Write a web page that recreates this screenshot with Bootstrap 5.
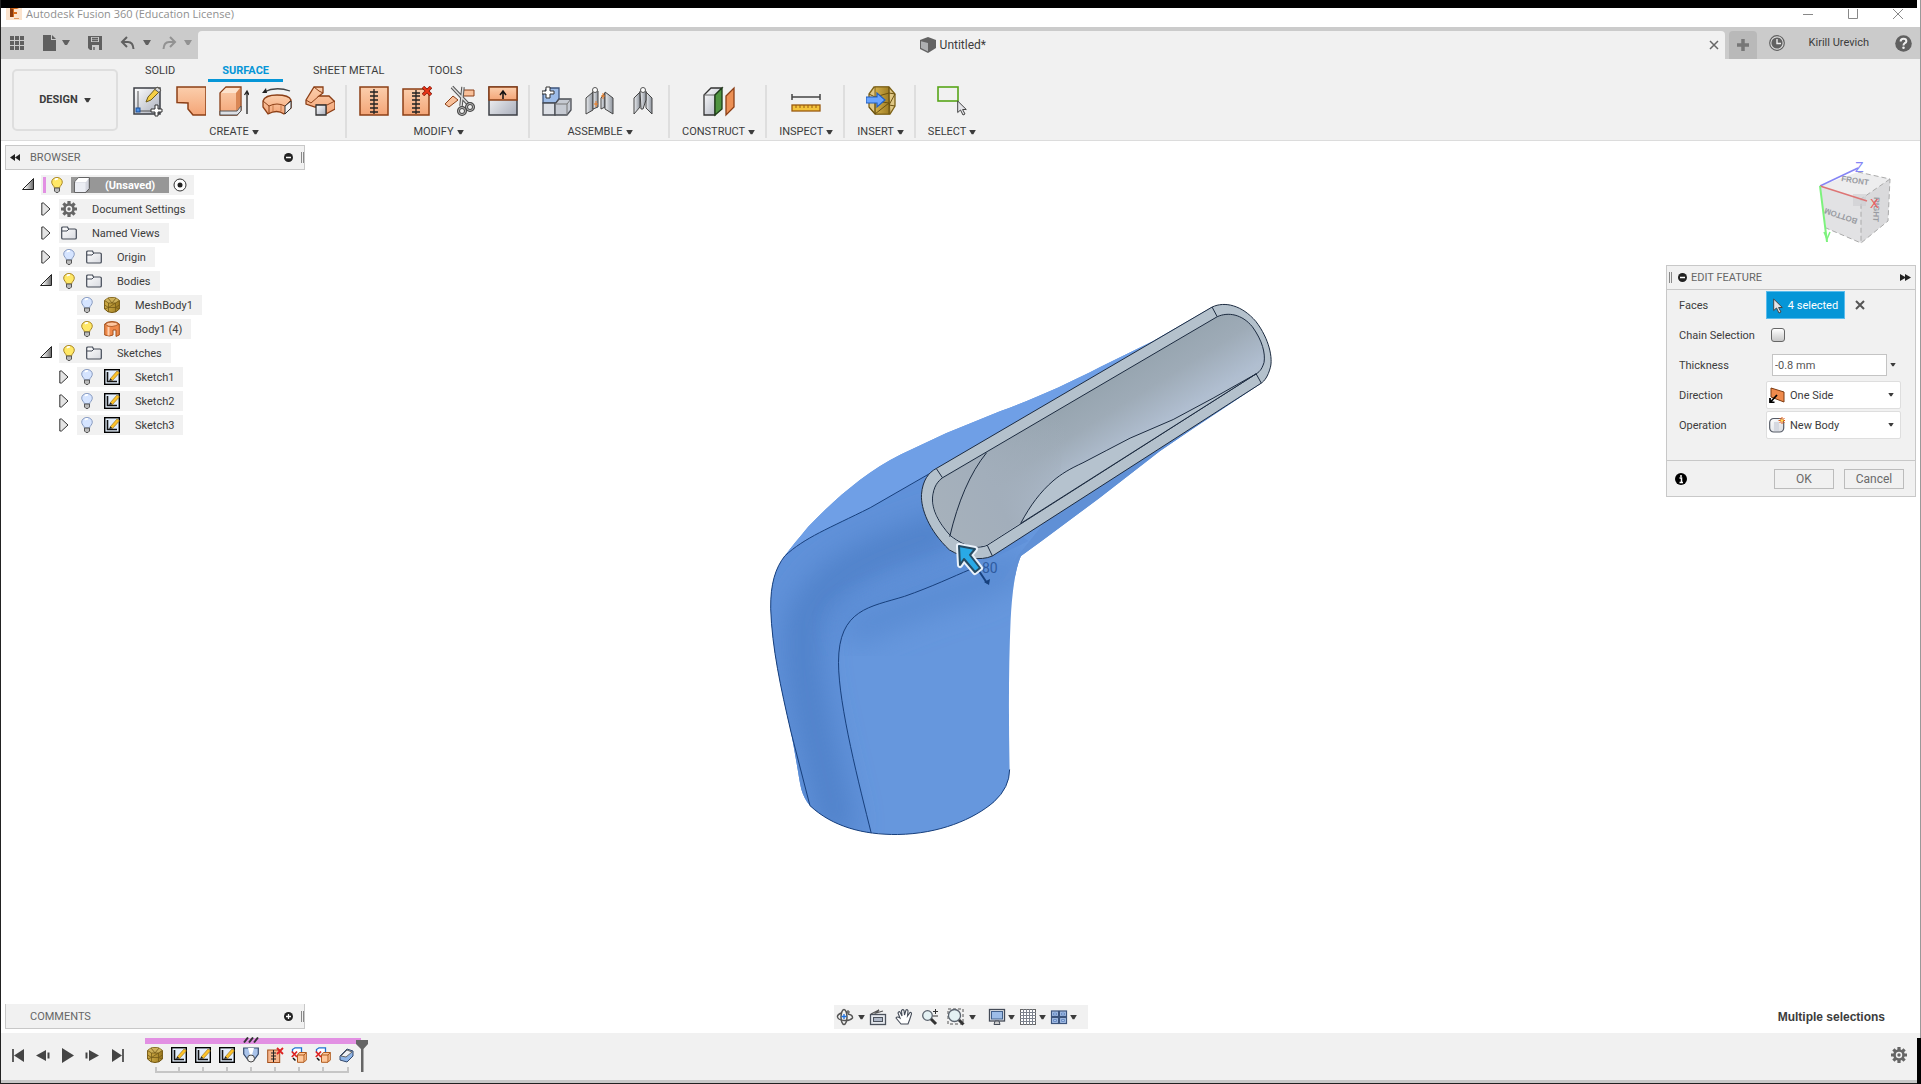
<!DOCTYPE html>
<html lang="en">
<head>
<meta charset="utf-8">
<meta name="viewport" content="width=device-width, initial-scale=1">
<title>Autodesk Fusion 360 (Education License)</title>
<link href="https://cdn.jsdelivr.net/npm/bootstrap@5.3.0/dist/css/bootstrap.min.css" rel="stylesheet">
<script src="https://cdn.jsdelivr.net/npm/bootstrap@5.3.0/dist/js/bootstrap.bundle.min.js"></script>
<style>
  :root { --panel: #f1f1f1; --edge: #c8c8c8; --ink: #3c3c3c; --accent: #0696d7; }
  body { font: 11px/16px Roboto, "Liberation Sans", sans-serif; color: var(--ink); background: #fff; overflow: hidden; }
  button, a { color: inherit; text-decoration: none; }
  button { border: 0; background: none; padding: 0; }
  svg { display: block; flex: none; }
  .app-shell { border-left: 1px solid #222; border-right: 1px solid #999; }
  .top-strip { height: 8px; background: #000; margin-right: 3px; }
  .title-bar { height: 19px; color: #8f8f8f; padding: 0 17px 7px 5px; }
  .title-bar h1 { font: 11px/12px "Open Sans", sans-serif; margin: 0; }
  .doc-bar { height: 32px; background: #cbcbcb; padding-top: 4px; }
  .quick-bar { width: 197px; padding-left: 8px; margin-top: -4px; }
  .doc-tab { background: var(--panel); border-radius: 4px 4px 0 0; font-size: 12px; padding-right: 5px; }
  .new-tab { width: 28px; background: #b9b9b9; border-radius: 4px 4px 0 0; margin: 0 12px 0 4px; }
  .account { margin-top: -4px; padding-right: 8px; }
  .ribbon { background: var(--panel); border-bottom: 1px solid #dcdcdc; height: 82px; padding-left: 11px; }
  .workspace-btn { width: 106px; height: 62px; margin-top: 10px; border: 2px solid #dedede; border-radius: 5px; font-weight: 700; }
  .ribbon-tabs { padding: 4px 0 0 13px; }
  .ribbon-tabs a { margin-right: 16px; padding: 0 14px; height: 19px; line-height: 16px; }
  .ribbon-tabs a.active { color: var(--accent); font-weight: 700; border-bottom: 3px solid var(--accent); margin-left: 3px; }
  .tool-groups { padding-left: 15px; margin-top: 3px; }
  .tool-group { height: 53px; padding: 0 10px 0 12px; border-right: 2px solid #dedede; }
  .tool-group:last-child { border: 0; }
  .tool-icons { gap: 13px; height: 32px; }
  .menu-label { height: 16px; margin-top: 7px; gap: 3px; line-height: 16px; }
  .work-area { padding-top: 4px; }
  .side-left { width: 303px; padding-left: 4px; }
  .side-right { width: 254px; padding-right: 4px; }
  .dock-head { background: var(--panel); border: 1px solid var(--edge); height: 25px; color: #666; }
  .dock-wide { margin-right: -1px; }
  .grip { width: 3px; height: 11px; border: solid #888; border-width: 0 1px; }
  .tree { padding: 5px 0 0 17px; }
  .tree-row { height: 20px; margin-bottom: 4px; }
  .tree-row.l1 { padding-left: 18px; }
  .tree-row.l2 { padding-left: 36px; }
  .twist { width: 19px; height: 14px; padding-left: 1px; }
  .twist.open { padding-left: 0; }
  .tree-cell { background: var(--panel); height: 20px; padding: 0 9px 0 2px; }
  .tree-cell svg + svg { margin-left: 9px; }
  .tree-cell span { margin-left: 15px; padding-top: 1px; }
  .root-cell { padding: 0 7px 0 2px; }
  .root-mark { width: 3px; height: 16px; background: #e290e3; margin-right: 5px; }
  .root-name { background: #979797; color: #fff; height: 16px; width: 98px; font-weight: 700; padding-left: 3px; margin: 0 4px 0 8px; }
  .view-cube { margin: 13px 21px 17px auto; }
  .feature-dialog { background: var(--panel); border: 1px solid var(--edge); width: 250px; margin-left: auto; }
  .dialog-head { height: 24px; border-bottom: 1px solid var(--edge); color: #666; padding: 0 4px 0 2px; }
  .field-row { height: 30px; padding-left: 12px; }
  .field-row > label { width: 87px; padding-top: 1px; }
  .pick-btn { background: var(--accent); color: #fff; width: 79px; height: 28px; border: 1px solid #5abced; padding-top: 1px; }
  .length-box { width: 115px; height: 22px; margin-left: 6px; border: 1px solid #c4c4c4; outline: 0; padding: 0 2px; color: #555; background: #fff; }
  .pick-list { width: 135px; height: 28px; border: 1px solid #dedede; background: #fff; padding: 0 6px 0 2px; border-radius: 2px; }
  .pick-list select { appearance: none; border: 0; background: none; outline: 0; color: inherit; min-width: 0; padding: 1px 0 0 5px; }
  .tick { appearance: none; width: 14px; height: 14px; margin: 0 0 0 5px; border: 1px solid #666; border-radius: 3px; background: linear-gradient(#fff, #c8c8c8); }
  .dialog-foot { height: 36px; border-top: 1px solid var(--edge); padding: 0 11px 0 8px; margin-top: 20px; }
  .foot-btn { width: 60px; height: 20px; border: 1px solid #bcbcbc; color: #6a6a6a; font-size: 12px; }
  .bottom-dock { display: grid; grid-template-columns: 1fr auto 1fr; height: 29px; }
  .nav-bar { height: 24px; background: var(--panel); padding: 0 11px 0 2px; margin-top: 1px; }
  .status-text { font: bold 12px/16px "Liberation Sans", sans-serif; padding-right: 35px; margin-top: 5px; }
  .timeline { height: 50px; background: var(--panel); border-bottom: 3px solid #c8c8c8; padding: 0 13px 0 6px; position: relative; }
  .corner-block { position: absolute; right: -1px; top: 5px; bottom: -4px; width: 4px; background: #000; }
  .play-controls { margin-top: 10px; }
  .play-controls button { width: 25px; height: 24px; }
  .feature-track { margin: 5px 0 0 13px; position: relative; }
  .range-bar { height: 6px; background: #e290e3; }
  .feature-track button { width: 24px; height: 22px; }
  .track-marker { position: absolute; right: -8px; top: 2px; }
  .track-hash { position: absolute; left: 98px; top: -1px; }
  .base-line { height: 1px; background: #222; }
</style>
</head>
<body>
<svg width="0" height="0" class="position-absolute" aria-hidden="true">
  <defs>
    <linearGradient id="gOr" x1="0" y1="0" x2="0" y2="1"><stop offset="0" stop-color="#fbceac"/><stop offset="1" stop-color="#f4a577"/></linearGradient>
    <linearGradient id="gGr" x1="0" y1="0" x2="1" y2="1"><stop offset="0" stop-color="#fff"/><stop offset="1" stop-color="#a9aebb"/></linearGradient>
    <linearGradient id="gLt" x1="0" y1="0" x2="1" y2="1"><stop offset="0" stop-color="#fff"/><stop offset="1" stop-color="#d8dae0"/></linearGradient>
    <linearGradient id="gMt" x1="0" y1="0" x2="1" y2="0"><stop offset="0" stop-color="#eceef1"/><stop offset="1" stop-color="#8d939c"/></linearGradient>
    <linearGradient id="gGold" x1="0" y1="0" x2="1" y2="0"><stop offset="0" stop-color="#d3b04b"/><stop offset="1" stop-color="#9c7a20"/></linearGradient>
    <linearGradient id="gTw" x1="0" y1="0" x2="1" y2="0"><stop offset="0.2" stop-color="#fff"/><stop offset="1" stop-color="#666"/></linearGradient>
    <linearGradient id="gIn" gradientUnits="userSpaceOnUse" x1="890" y1="320" x2="1010" y2="520"><stop offset="0" stop-color="#97a5b0"/><stop offset=".35" stop-color="#9eabb7"/><stop offset=".8" stop-color="#b0bed0"/><stop offset="1" stop-color="#b5c2ce"/></linearGradient>
    <linearGradient id="gEnd" gradientUnits="userSpaceOnUse" x1="500" y1="620" x2="900" y2="400"><stop offset="0" stop-color="#a6b1bb"/><stop offset=".4" stop-color="#a2aebb"/><stop offset="1" stop-color="#a2aebb" stop-opacity="0"/></linearGradient>
    <filter id="soft" x="-30%" y="-30%" width="160%" height="160%"><feGaussianBlur stdDeviation="40"/></filter>
    <symbol id="caret" viewBox="0 0 8 6"><path d="M0 0H8L5 5H3Z" fill="currentColor"/></symbol>
    <symbol id="bulbOn" viewBox="0 0 12 16"><path d="M6 .5C2.800.5.7 2.600.7 5.200.7 7.600 3.100 8.800 3.500 11H8.500C8.900 8.800 11.300 7.600 11.300 5.200 11.300 2.600 9.200.5 6 .5Z" fill="#ffe867" stroke="#a88524"/><path d="M4 3Q5 1.500 7 2" stroke="#fff" stroke-width="1.500" fill="none"/><path d="M3.500 11H8.500V14L7 15.500H5L3.500 14Z" fill="#bbb" stroke="#555"/></symbol>
    <symbol id="bulbOff" viewBox="0 0 12 16"><path d="M6 .5C2.800.5.7 2.600.7 5.200.7 7.600 3.100 8.800 3.500 11H8.500C8.900 8.800 11.300 7.600 11.300 5.200 11.300 2.600 9.200.5 6 .5Z" fill="#d5e4ff" stroke="#879ac0"/><path d="M4 3Q5 1.500 7 2" stroke="#fff" stroke-width="1.500" fill="none"/><path d="M3.500 11H8.500V14L7 15.500H5L3.500 14Z" fill="#bbb" stroke="#555"/></symbol>
    <symbol id="folder" viewBox="0 0 16 16"><path d="M.7 13V3Q.7 2 2 2H6.500L7.500 4H14Q15.300 4 15.300 5V13Q15.300 14 14 14H2Q.7 14 .7 13Z" fill="url(#gLt)" stroke="#444b57" stroke-width="1.200"/><path d="M1 6H6L8 4" fill="none" stroke="#444b57"/></symbol>
    <symbol id="gear" viewBox="0 0 16 16"><g stroke="#666" stroke-width="3.200"><path d="M8 0V16M0 8H16M2.400 2.400 13.600 13.600M13.600 2.400 2.400 13.600"/></g><circle cx="8" cy="8" r="5.800" fill="#666"/><circle cx="8" cy="8" r="3.200" fill="#f1f1f1"/><circle cx="8" cy="8" r="1.700" fill="#666"/></symbol>
    <symbol id="mesh" viewBox="0 0 16 16"><path d="M.6 3.500 4 1 8 .5 12 1 15.400 3.500V12L12 14.800 8 15.500 4 14.800.6 12Z" fill="url(#gGold)" stroke="#73560d"/><path d="M1 3.500 4 1 8 .7 12 1 15 3.500 11.500 6H4.500Z" fill="#cdb05a"/><path d="M.6 3.500 4.500 6H11.500L15.400 3.500M4.500 6V15M11.500 6V15M.6 8 4.500 10.500H11.500L15.400 8M4 1 8 6 12 1M4.500 10.500 11.500 6M.6 12 4.500 10.500M11.500 10.500 15.400 12" fill="none" stroke="#745b18" stroke-width=".8"/></symbol>
    <symbol id="body" viewBox="0 0 16 16"><path d="M.7 3Q3 .6 8 .6T15.300 3V14L12 15.400V9H9V14Q6 16 .7 14Z" fill="#ef8a4c" stroke="#a4501c"/><path d="M1 3Q4 6 8 5.500T15 3Q12 1 8 1T1 3Z" fill="#ffc7a0" stroke="#a4501c" stroke-width=".8"/><path d="M4.500 6V14.500" stroke="#ffd0ae" stroke-width="2"/></symbol>
    <symbol id="sketch" viewBox="0 0 16 16"><rect x=".7" y=".7" width="14.600" height="14.600" fill="#e3eefb" stroke="#000" stroke-width="1.400"/><path d="M3.500 3V12.500H13" stroke="#111" stroke-width="1.600" fill="none"/><path d="M6 10 13 2 15.500 3.800 8.500 11.500Z" fill="#ffc329" stroke="#8a6a14" stroke-width=".6"/><path d="M5 12 6.200 9.500 8.500 11.300Z" fill="#222"/></symbol>
    <symbol id="twC" viewBox="0 0 10 14"><path d="M.8 1H2.500L9 7L2.500 13H.8Z" fill="#e4e4e4" stroke="#333"/></symbol>
    <symbol id="twO" viewBox="0 0 12 12"><path d="M11.500.5V11.500H.5Z" fill="url(#gTw)" stroke="#222"/></symbol>
    <symbol id="box" viewBox="0 0 16 16"><path d="M.7 5 4.500.7H15.300V11.500L12 15.300H.7Z" fill="#d5d7e0" stroke="#555"/><path d="M1 5 4.500 1H15L12 5Z" fill="#fff"/><path d="M1 5.500H11.500V15H1Z" fill="#eceef4"/></symbol>
    <symbol id="pointer" viewBox="0 0 10 16"><path d="M.7 1V12.500L3.500 10 6 15 8 14 5.600 9.500H9.300Z" fill="#e4e4e8" stroke="#444"/></symbol>
    <symbol id="redx" viewBox="0 0 10 10"><path d="M1 1 9 9M9 1 1 9" stroke="#7c1408" stroke-width="3.400"/><path d="M1.300 1.300 8.700 8.700M8.700 1.300 1.300 8.700" stroke="#e93618" stroke-width="2.200"/></symbol>
    <symbol id="removeFace" viewBox="0 0 16 16"><path d="M1.500 5V2.500L4 .8H10.500V5" fill="#fff" stroke="#1f6fd0" stroke-width="1.300"/><path d="M6.500 8 8.500 5.500H15.300V13L13 15.300H6.500Z" fill="#ffc89c" stroke="#b05a1d"/><path d="M6.500 8H13V15M13 8 15.300 5.500" stroke="#b05a1d" fill="none"/><path d="M.8 4.500 6 10M6 4.500 .8 10" stroke="#d22" stroke-width="1.700"/><path d="M2 11 4.500 13.500" stroke="#111" stroke-width="1.500"/></symbol>
  </defs>
</svg>

<div class="app-shell vh-100 d-flex flex-column">
  <div class="top-strip"></div>
  <header>
    <div class="title-bar d-flex align-items-center">
      <svg width="16" height="12" viewBox="0 0 16 12"><path d="M0 0H16V12H0Z" fill="#fbe3cd"/><path d="M4 0H13L11 1H8V4H11V6H8V9H4Z" fill="#d66b1c"/><path d="M4 0 7 1V9H4Z" fill="#8a3a0c"/><path d="M8 10H13V11H8Z" fill="#e19a62"/></svg>
      <h1 class="ms-1">Autodesk Fusion 360 (Education License)</h1>
      <div class="ms-auto d-flex" style="gap:35px">
        <button aria-label="Minimize"><svg width="10" height="10"><path d="M0 5.500H10" stroke="#888"/></svg></button>
        <button aria-label="Maximize"><svg width="10" height="10"><path d="M.5 0V9.500H9.500V0" stroke="#888" fill="none"/></svg></button>
        <button aria-label="Close"><svg width="10" height="10"><path d="M0 0 10 10M10 0 0 10" stroke="#888"/></svg></button>
      </div>
    </div>
    <div class="doc-bar d-flex">
      <div class="quick-bar d-flex align-items-center" style="color:#606060">
        <button aria-label="Data panel"><svg width="16" height="16" viewBox="0 0 16 16"><g fill="#606060"><path d="M1 1h4v4H1zM6 1h4v4H6zM11 1h4v4h-4zM1 6h4v4H1zM6 6h4v4H6zM11 6h4v4h-4zM1 11h4v4H1zM6 11h4v4H6zM11 11h4v4h-4z"/></g></svg></button>
        <button aria-label="File" class="d-flex align-items-center ms-3" style="gap:5px"><svg width="16" height="16" viewBox="0 0 16 16"><path d="M2 0H10V5H15V16H2ZM11 0 15 4H11Z" fill="#606060"/></svg><svg width="8" height="6"><use href="#caret"/></svg></button>
        <button aria-label="Save" class="ms-3"><svg width="18" height="16" viewBox="0 0 16 16"><path d="M1 1H15V15H3L1 13Z" fill="#606060"/><path d="M4 2H12V7H4ZM5 10H12V15H5Z" fill="#cbcbcb"/><path d="M5 3.500H11M5 5.500H11M7 12V15" stroke="#606060" stroke-width="1.400"/></svg></button>
        <button aria-label="Undo" class="d-flex align-items-center ms-3" style="gap:7px"><svg width="16" height="16" viewBox="0 0 16 16"><path d="M7 2 2 7 7 12M2 7H8Q13 7 13.500 14" fill="none" stroke="#606060" stroke-width="2"/></svg><svg width="8" height="6"><use href="#caret"/></svg></button>
        <button aria-label="Redo" class="d-flex align-items-center" style="gap:7px;margin-left:10px;color:#929292"><svg width="16" height="16" viewBox="0 0 16 16"><path d="M9 2 14 7 9 12M14 7H8Q3 7 2.500 14" fill="none" stroke="#929292" stroke-width="2"/></svg><svg width="8" height="6"><use href="#caret"/></svg></button>
      </div>
      <div class="doc-tab flex-grow-1 d-flex align-items-center">
        <div class="flex-grow-1 d-flex justify-content-center align-items-center gap-1">
          <svg width="16" height="16" viewBox="0 0 16 16"><path d="M0 3 8 0 16 3V11L8 16 0 12Z" fill="#636363"/><path d="M1 4.200 8 6V14.500L1 11Z" fill="#aeb0b2"/></svg>
          <span>Untitled*</span>
        </div>
        <button aria-label="Close document"><svg width="12" height="10" viewBox="0 0 12 10"><path d="M2 1 10 9M10 1 2 9" stroke="#666" stroke-width="1.500"/></svg></button>
      </div>
      <button class="new-tab d-flex align-items-center justify-content-center" aria-label="New document"><svg width="14" height="14"><path d="M7 1V13M1 7H13" stroke="#777" stroke-width="3.500"/></svg></button>
      <div class="account d-flex align-items-center">
        <svg width="16" height="16" viewBox="0 0 16 16"><circle cx="8" cy="8" r="7.300" fill="#dcdcdc" stroke="#606060" stroke-width="1.200"/><circle cx="8" cy="8" r="5.600" fill="#606060"/><path d="M8 4V8.500H12" stroke="#eee" stroke-width="1.400" fill="none"/></svg>
        <button style="margin:0 26px 0 24px">Kirill Urevich</button>
        <button aria-label="Help"><svg width="17" height="17" viewBox="0 0 16 16"><circle cx="8" cy="8" r="7.800" fill="#606060"/><path d="M5.300 6Q5.300 3.500 8 3.500T10.700 5.800Q10.700 7 9 7.800 8 8.300 8 9.800" fill="none" stroke="#eee" stroke-width="1.900"/><circle cx="8" cy="12" r="1.200" fill="#eee"/></svg></button>
      </div>
    </div>
    <div class="ribbon d-flex">
      <button class="workspace-btn d-flex align-items-center justify-content-center" style="gap:6px">DESIGN <svg width="7" height="5"><use href="#caret"/></svg></button>
      <div>
        <nav class="ribbon-tabs d-flex">
          <a href="#solid">SOLID</a><a href="#surface" class="active">SURFACE</a><a href="#sheet">SHEET METAL</a><a href="#tools">TOOLS</a>
        </nav>
        <div class="tool-groups d-flex">
          <div class="tool-group ps-0 d-flex flex-column align-items-center">
            <div class="tool-icons d-flex">
              <svg width="30" height="32" viewBox="0 0 30 32"><rect x="1" y="3" width="26" height="26" fill="url(#gGr)" stroke="#3c3f45" stroke-width="1.500"/><path d="M5 6V26H18" fill="none" stroke="#555"/><rect x="3" y="23" width="4" height="4" fill="#4a90e6" stroke="#1d4f96"/><path d="M13 17 15 12 24 2 28 5 18 15Z" fill="#f6cf45" stroke="#6e5a18"/><path d="M24 2 28 5 26 7.500 22 4.500Z" fill="#d8d8d8" stroke="#555"/><path d="M22 20H25V24H29V27H25V31H22V27H18V24H22Z" fill="#fff" stroke="#333"/></svg>
              <svg width="30" height="32" viewBox="0 0 30 32"><path d="M1 2H30V30H17L12 24V18L1 17.500Z" fill="url(#gOr)" stroke="#8c3f16" stroke-width="1.500"/></svg>
              <svg width="30" height="32" viewBox="0 0 30 32"><path d="M1 8 7 2H22V25L18 30H1Z" fill="url(#gOr)" stroke="#8c3f16" stroke-width="1.300"/><path d="M2 8 7 3H21L17 8Z" fill="#fde3cd"/><path d="M17 8V26L21 22V3" fill="#d98654"/><path d="M1 26H18L22 21V26L18 30H1Z" fill="#dde0e6" stroke="#555"/><path d="M28 29V7M25.500 10 28 6 30 10" stroke="#222" fill="none" stroke-width="1.300"/></svg>
              <svg width="30" height="32" viewBox="0 0 30 32"><path d="M2 7Q14 1 28 6" stroke="#444" fill="none" stroke-width="1.300"/><path d="M0 8 4 3 5 8Z" fill="#222"/><path d="M1 16Q3 10 15 10T29 15V23L22 29Q15 24 6 29L1 22Z" fill="url(#gOr)" stroke="#8c3f16" stroke-width="1.300"/><path d="M1 16 7 21Q15 17 23 21L29 15M7 21V29" fill="none" stroke="#8c3f16"/><path d="M23 21 29 16V23L23 29Z" fill="#f2f2f4" stroke="#333"/><path d="M11 20V26M19 20V26" stroke="#c97a4a"/></svg>
              <svg width="30" height="32" viewBox="0 0 30 32"><path d="M1 15 9 2H18V8L14 11 24 11 30 17V24L21 29V22H10L1 19Z" fill="url(#gOr)" stroke="#8c3f16" stroke-width="1.300"/><path d="M1 15 6 18 14 11M11 20H22L30 16M9 2 14 6 18 8" fill="none" stroke="#8c3f16"/><path d="M11 20H21V30H11Z" fill="url(#gGr)" stroke="#333" stroke-width="1.300"/></svg>
            </div>
            <button class="menu-label d-flex align-items-center">CREATE <svg width="7" height="5"><use href="#caret"/></svg></button>
          </div>
          <div class="tool-group d-flex flex-column align-items-center">
            <div class="tool-icons d-flex">
              <svg width="30" height="32" viewBox="0 0 30 32"><rect x="1" y="2" width="28" height="28" fill="url(#gOr)" stroke="#8c3f16" stroke-width="1.500"/><path d="M15 4V29M11 7H19M11 11H19M11 15H19M11 19H19M11 23H19M11 27H19" stroke="#222" stroke-width="1.300"/></svg>
              <svg width="30" height="32" viewBox="0 0 30 32"><rect x="1" y="4" width="26" height="26" fill="url(#gOr)" stroke="#8c3f16" stroke-width="1.500"/><path d="M14 5V29M10 8H18M10 11H18M10 15H18M10 19H18M10 23H18M10 27H18" stroke="#222" stroke-width="1.300"/><use href="#redx" x="20" y="1" width="10" height="10"/></svg>
              <svg width="30" height="32" viewBox="0 0 30 32"><path d="M0 19 8 11 13 15 4 22Z" fill="#f8c09a" stroke="#8c3f16"/><path d="M17 5H29V11H16Z" fill="#f8c09a" stroke="#8c3f16"/><path d="M7 2 24 20M18 2 16 21" stroke="#555" stroke-width="3.500"/><path d="M7 2 24 20M18 2 16 21" stroke="#ddd" stroke-width="1.500"/><circle cx="25" cy="22" r="3.500" fill="none" stroke="#444" stroke-width="3"/><circle cx="25" cy="22" r="3.500" fill="none" stroke="#bbb" stroke-width="1"/><circle cx="17" cy="26" r="3.500" fill="none" stroke="#444" stroke-width="3"/><circle cx="17" cy="26" r="3.500" fill="none" stroke="#bbb" stroke-width="1"/></svg>
              <svg width="30" height="32" viewBox="0 0 30 32"><rect x="1" y="2" width="28" height="28" fill="url(#gGr)" stroke="#3c3f45" stroke-width="1.500"/><rect x="1" y="2" width="28" height="13" fill="url(#gOr)" stroke="#8c3f16" stroke-width="1.500"/><path d="M15 14V7M12 10 15 6 18 10" stroke="#111" fill="none" stroke-width="1.500"/></svg>
            </div>
            <button class="menu-label d-flex align-items-center">MODIFY <svg width="7" height="5"><use href="#caret"/></svg></button>
          </div>
          <div class="tool-group d-flex flex-column align-items-center">
            <div class="tool-icons d-flex">
              <svg width="30" height="32" viewBox="0 0 30 32"><path d="M1 9 5 3H17V14L14 18H1Z" fill="#9dbce8" stroke="#3c547c" stroke-width="1.300"/><path d="M1 18H13V30H1Z" fill="#dcdfe5" stroke="#4a4d54" stroke-width="1.300"/><path d="M13 19 17 14H29V25L25 30H13Z" fill="#c6cad2" stroke="#4a4d54" stroke-width="1.300"/><path d="M13 19H25V30M25 19 29 14" fill="none" stroke="#777"/><path d="M4 2H8V6H12V9H8V13H4V9H0V6H4Z" fill="#fff" stroke="#333"/></svg>
              <svg width="30" height="32" viewBox="0 0 30 32"><path d="M1 13 8 7V25L1 29Z" fill="url(#gMt)" stroke="#444"/><path d="M8 5 13 6V22L8 24Z" fill="url(#gMt)" stroke="#444"/><path d="M16 13 20 8V22L16 24Z" fill="url(#gMt)" stroke="#444"/><path d="M20 7 28 13V29L20 24Z" fill="url(#gMt)" stroke="#444"/><circle cx="10" cy="5" r="2.500" fill="#fff" stroke="#555"/><path d="M11 16V22M9 19H13M18 8V14M16 11H20" stroke="#ef7a1d"/></svg>
              <svg width="30" height="32" viewBox="0 0 30 32"><path d="M6 13 12 7V22L6 29Z" fill="url(#gMt)" stroke="#444"/><path d="M18 7 24 13V29L18 23Z" fill="url(#gMt)" stroke="#444"/><path d="M12 6H18V15L15 24H13Z" fill="url(#gMt)" stroke="#444"/><circle cx="15" cy="5" r="2.500" fill="#fff" stroke="#555"/></svg>
            </div>
            <button class="menu-label d-flex align-items-center">ASSEMBLE <svg width="7" height="5"><use href="#caret"/></svg></button>
          </div>
          <div class="tool-group d-flex flex-column align-items-center">
            <div class="tool-icons d-flex"><svg width="32" height="32" viewBox="0 0 32 32"><path d="M1 10 8 3H19L12 10V30H1Z" fill="url(#gGr)" stroke="#333" stroke-width="1.300"/><path d="M1 10H12L19 3" fill="none" stroke="#666"/><path d="M12 10 19 3V24L12 30Z" fill="#4f9440" stroke="#1e3d18" stroke-width="1.300"/><path d="M23 11 31 3V22L23 30Z" fill="#ec9055" stroke="#8c3f16" stroke-width="1.300"/></svg></div>
            <button class="menu-label d-flex align-items-center">CONSTRUCT <svg width="7" height="5"><use href="#caret"/></svg></button>
          </div>
          <div class="tool-group d-flex flex-column align-items-center">
            <div class="tool-icons d-flex"><svg width="30" height="32" viewBox="0 0 30 32"><path d="M1 12H29M1 9V15M29 9V15" stroke="#444" stroke-width="1.500"/><rect x="1" y="20" width="28" height="6" fill="#f3c33b" stroke="#9a5b10" stroke-width="1.300"/><path d="M5 20V23M9 20V23M13 20V23M17 20V23M21 20V23M25 20V23" stroke="#9a5b10"/></svg></div>
            <button class="menu-label d-flex align-items-center">INSPECT <svg width="7" height="5"><use href="#caret"/></svg></button>
          </div>
          <div class="tool-group d-flex flex-column align-items-center">
            <div class="tool-icons d-flex"><svg width="30" height="32" viewBox="0 0 30 32"><path d="M8 2H23L29 9V21L24 29H9L3 22V9Z" fill="#dfc785" stroke="#7e6318" stroke-width="1.300"/><path d="M9 2H23V12L24 29H9Z" fill="url(#gGold)" stroke="#7e6318"/><path d="M23 2V29M23 8 29 9 23 20 29 21M9 12 23 8M9 29 23 18 9 16M3 9 9 12V29L3 22" fill="none" stroke="#6b5211"/><path d="M0 12H11V8L19 15 11 22V18H0Z" fill="#6aa5ff" stroke="#225fc0" stroke-width="1.200"/></svg></div>
            <button class="menu-label d-flex align-items-center">INSERT <svg width="7" height="5"><use href="#caret"/></svg></button>
          </div>
          <div class="tool-group d-flex flex-column align-items-center">
            <div class="tool-icons d-flex"><svg width="30" height="32" viewBox="0 0 30 32"><rect x="1" y="2" width="20" height="14" fill="none" stroke="#58a618" stroke-width="1.600"/><use href="#pointer" x="20" y="15" width="10" height="16"/></svg></div>
            <button class="menu-label d-flex align-items-center">SELECT <svg width="7" height="5"><use href="#caret"/></svg></button>
          </div>
        </div>
      </div>
    </div>
  </header>

  <main class="work-area flex-grow-1 d-flex" style="min-height:0">
    <aside class="side-left">
      <div class="dock-head dock-wide d-flex align-items-center ps-1">
        <svg width="11" height="8"><path d="M5 0V7L0 3.500ZM10 0V7L5 3.500Z" fill="#222"/></svg>
        <span style="margin-left:9px">BROWSER</span>
        <button class="ms-auto me-2" aria-label="Collapse browser"><svg width="9" height="9"><circle cx="4.500" cy="4.500" r="4.500" fill="#222"/><path d="M2 4.500H7" stroke="#fff" stroke-width="1.500"/></svg></button><i class="grip"></i>
      </div>
      <div class="tree">
        <div class="tree-row d-flex align-items-center"><div class="twist open"><svg width="12" height="12"><use href="#twO"/></svg></div>
          <div class="tree-cell root-cell d-flex align-items-center"><i class="root-mark"></i><svg width="12" height="16"><use href="#bulbOn"/></svg>
            <div class="root-name d-flex align-items-center"><svg width="16" height="16"><use href="#box"/></svg><span>(Unsaved)</span></div>
            <svg width="14" height="14"><circle cx="7" cy="7" r="6" fill="#fff" stroke="#333"/><circle cx="7" cy="7" r="2.500" fill="#222"/></svg></div></div>
        <div class="tree-row l1 d-flex align-items-center"><div class="twist"><svg width="10" height="14"><use href="#twC"/></svg></div><div class="tree-cell d-flex align-items-center"><svg width="16" height="16"><use href="#gear"/></svg><span>Document Settings</span></div></div>
        <div class="tree-row l1 d-flex align-items-center"><div class="twist"><svg width="10" height="14"><use href="#twC"/></svg></div><div class="tree-cell d-flex align-items-center"><svg width="16" height="16"><use href="#folder"/></svg><span>Named Views</span></div></div>
        <div class="tree-row l1 d-flex align-items-center"><div class="twist"><svg width="10" height="14"><use href="#twC"/></svg></div><div class="tree-cell d-flex align-items-center"><svg width="16" height="16"><use href="#bulbOff"/></svg><svg width="16" height="16"><use href="#folder"/></svg><span>Origin</span></div></div>
        <div class="tree-row l1 d-flex align-items-center"><div class="twist open"><svg width="12" height="12"><use href="#twO"/></svg></div><div class="tree-cell d-flex align-items-center"><svg width="16" height="16"><use href="#bulbOn"/></svg><svg width="16" height="16"><use href="#folder"/></svg><span>Bodies</span></div></div>
        <div class="tree-row l2 d-flex align-items-center"><div class="twist"></div><div class="tree-cell d-flex align-items-center"><svg width="16" height="16"><use href="#bulbOff"/></svg><svg width="16" height="16"><use href="#mesh"/></svg><span>MeshBody1</span></div></div>
        <div class="tree-row l2 d-flex align-items-center"><div class="twist"></div><div class="tree-cell d-flex align-items-center"><svg width="16" height="16"><use href="#bulbOn"/></svg><svg width="16" height="16"><use href="#body"/></svg><span>Body1 (4)</span></div></div>
        <div class="tree-row l1 d-flex align-items-center"><div class="twist open"><svg width="12" height="12"><use href="#twO"/></svg></div><div class="tree-cell d-flex align-items-center"><svg width="16" height="16"><use href="#bulbOn"/></svg><svg width="16" height="16"><use href="#folder"/></svg><span>Sketches</span></div></div>
        <div class="tree-row l2 d-flex align-items-center"><div class="twist"><svg width="10" height="14"><use href="#twC"/></svg></div><div class="tree-cell d-flex align-items-center"><svg width="16" height="16"><use href="#bulbOff"/></svg><svg width="16" height="16"><use href="#sketch"/></svg><span>Sketch1</span></div></div>
        <div class="tree-row l2 d-flex align-items-center"><div class="twist"><svg width="10" height="14"><use href="#twC"/></svg></div><div class="tree-cell d-flex align-items-center"><svg width="16" height="16"><use href="#bulbOff"/></svg><svg width="16" height="16"><use href="#sketch"/></svg><span>Sketch2</span></div></div>
        <div class="tree-row l2 d-flex align-items-center"><div class="twist"><svg width="10" height="14"><use href="#twC"/></svg></div><div class="tree-cell d-flex align-items-center"><svg width="16" height="16"><use href="#bulbOff"/></svg><svg width="16" height="16"><use href="#sketch"/></svg><span>Sketch3</span></div></div>
      </div>
    </aside>

    <section class="flex-grow-1 d-flex align-items-center justify-content-center" aria-label="Model view">
      <svg width="630" height="568" viewBox="0 0 630 568">
        <defs>
          <clipPath id="sil"><path d="M1313 45 1142 140 988 213C890 262 800 300 697 337L540 398 410 457C300 510 210 590 140 660 110 695 90 718 72 742 45 775 30 820 31 890 35 1000 60 1110 90 1235 107 1320 112 1360 120 1395Q128 1422 145 1441C210 1500 300 1523 400 1522 520 1520 620 1480 680 1430Q725 1390 725 1340C722 1200 722 1050 728 920Q735 790 758 742L818 700 987 579 1162 448 1258 385 1456 258Z"/></clipPath>
        </defs>
        <g transform="translate(90 0) scale(.3443 .3571)" stroke-linejoin="round">
          <g clip-path="url(#sil)">
            <path d="M0 0H1568V1568H0Z" fill="#6697dd"/>
            <path d="M323 1518C290 1390 228 1160 228 1040 228 890 320 885 420 855 500 828 560 800 610 780L780 700 500 500 320 607C200 665 130 690 72 742L0 850V1560Z" fill="#6091d9"/>
            <path d="M560 660C400 720 190 760 125 930 110 1060 150 1200 230 1520" fill="none" stroke="#4f81c9" stroke-width="95" filter="url(#soft)"/>
            <path d="M250 960Q480 860 640 820L760 760" fill="none" stroke="#598ad2" stroke-width="80" filter="url(#soft)"/>
            <path d="M50 775 72 742C130 690 200 665 320 607L500 508 1313 45 1200 0H0Z" fill="#6f9fe6"/>
            <path d="M750 740 900 560 1456 258 1456 400 700 820Z" fill="#6090d6"/>
          </g>
          <g fill="none" stroke="#173f7c" stroke-width="1">
            <path vector-effect="non-scaling-stroke" d="M495 510 320 607C200 665 130 690 72 742 45 775 30 820 31 890 35 1000 60 1110 90 1235L145 1441C210 1500 300 1523 400 1522 520 1520 620 1480 680 1430Q725 1390 725 1340"/>
            <path vector-effect="non-scaling-stroke" d="M323 1518C290 1390 228 1160 228 1040 228 890 320 885 420 855 500 828 560 800 610 780"/>
          </g>
          <g stroke="#1c2b40">
            <path vector-effect="non-scaling-stroke" fill="#b4c1cc" d="M512 497 1313 45C1350 28 1400 40 1440 85 1480 135 1490 190 1482 215 1475 240 1465 252 1456 258L675 742C640 757 590 748 550 725 490 670 467 610 469 570 472 530 490 508 512 497Z"/>
            <path vector-effect="non-scaling-stroke" fill="url(#gIn)" d="M530 523 1328 72C1360 58 1400 65 1430 100 1460 140 1468 175 1464 200 1457 222 1448 228 1441 232L660 712C635 722 600 720 553 685 515 645 500 610 501 580 504 545 518 532 530 523Z"/>
            <path stroke="none" fill="url(#gEnd)" d="M532 525 900 317 860 585 660 710C635 720 600 718 554 683 517 645 502 610 503 580 506 547 520 534 532 525Z"/>
            <path vector-effect="non-scaling-stroke" fill="#b5c2ce" d="M757 651C785 600 815 562 851 532 875 512 900 498 938 481 985 458 1030 434 1075 412L1200 360 1316 300 1441 232Z"/>
            <path vector-effect="non-scaling-stroke" fill="none" d="M512 497 530 523M1313 45 1328 72M1441 232 1456 258M660 712 675 742M658 453C610 510 575 590 551 688"/>
          </g>
        </g>
        <path d="M309 280 317 292" stroke="#17417e" stroke-width="2"/><path d="M314 291 320 288 319 294Z" fill="#17417e"/>
        <text x="312" y="282" font-family="Roboto, sans-serif" font-size="14" fill="#2e5b9f">80</text>
        <path d="M289 255 305 258 300 264 310 277 305 281 294 268 290 274Z" fill="#29a9e6" stroke="#e9f1fa" stroke-width="6" stroke-linejoin="round"/>
        <path d="M289 255 305 258 300 264 310 277 305 281 294 268 290 274Z" fill="#29a9e6" stroke="#264b63" stroke-width="2" stroke-linejoin="round"/>
      </svg>
    </section>

    <aside class="side-right">
      <svg class="view-cube" width="80" height="90" viewBox="0 0 80 90">
        <path d="M5 28 43 14 75 21 46 41Z" fill="#ededee"/><path d="M5 28 46 41V85L11 70Z" fill="#e2e2e4"/><path d="M46 41 75 21 73 63 46 85Z" fill="#dadadc"/>
        <path d="M43 14 75 21 73 63 46 85 11 70M75 21 46 41V85" fill="none" stroke="#aaa" stroke-dasharray="5 3"/>
        <rect x="38" y="36" width="13" height="12" fill="#cdcdd1" opacity=".6"/>
        <g font-family="Liberation Sans, sans-serif" font-weight="bold" fill="#999ba1">
          <text font-size="8" transform="translate(26 23) rotate(9)">FRONT</text>
          <text font-size="8" transform="translate(43 61) rotate(199)">BOTTOM</text>
          <text font-size="8" transform="translate(59 39) rotate(92)">RIGHT</text>
        </g>
        <path d="M5 28 43 10" stroke="#8585f5" stroke-width="1.500"/><path d="M5 28 52 43" stroke="#dd7575" stroke-width="1.500"/><path d="M5 28 12 84" stroke="#7df27d" stroke-width="2"/><path d="M9 74 12 81 15 74" stroke="#7df27d" stroke-width="1.500" fill="none"/>
        <g font-family="Liberation Sans, sans-serif"><text x="40" y="14" font-size="14" fill="#8585f5">Z</text><text x="55" y="50" font-size="13" fill="#ee5a5a">X</text></g>
      </svg>
      <form class="feature-dialog" onsubmit="return false">
        <div class="dialog-head d-flex align-items-center">
          <i class="grip"></i><svg width="9" height="9" style="margin:0 4px 0 6px"><circle cx="4.500" cy="4.500" r="4.500" fill="#222"/><path d="M2 4.500H7" stroke="#fff" stroke-width="1.500"/></svg>
          <span>EDIT FEATURE</span>
          <svg class="ms-auto" width="11" height="8"><path d="M0 0V7L6 3.500ZM5 0V7L11 3.500Z" fill="#222"/></svg>
        </div>
        <div class="field-row d-flex align-items-center"><label for="faces">Faces</label>
          <button id="faces" type="button" class="pick-btn d-flex align-items-center justify-content-center" style="gap:5px"><svg width="10" height="16"><use href="#pointer"/></svg>4 selected</button>
          <button type="button" aria-label="Clear selection" style="margin-left:10px"><svg width="10" height="10"><path d="M1 1 9 9M9 1 1 9" stroke="#555" stroke-width="2"/></svg></button></div>
        <div class="field-row d-flex align-items-center"><label for="chain">Chain Selection</label><input id="chain" class="tick" type="checkbox"></div>
        <div class="field-row d-flex align-items-center"><label for="thick">Thickness</label><input id="thick" class="length-box" type="text" value="-0.8 mm" autofocus><svg width="6" height="4" style="margin-left:3px"><use href="#caret"/></svg></div>
        <div class="field-row d-flex align-items-center"><label for="dir">Direction</label>
          <div class="pick-list d-flex align-items-center"><svg width="16" height="16" viewBox="0 0 16 16"><path d="M2 1 15 5V15L2 10Z" fill="#ef8a4c" stroke="#7c3a10"/><path d="M1.500 15 8 8M1 11V15.500H5.500" stroke="#000" stroke-width="1.800" fill="none"/></svg><select id="dir" class="flex-grow-1"><option>One Side</option></select><svg width="6" height="4"><use href="#caret"/></svg></div></div>
        <div class="field-row d-flex align-items-center"><label for="op">Operation</label>
          <div class="pick-list d-flex align-items-center"><svg width="16" height="16" viewBox="0 0 16 16"><rect x=".7" y="1.500" width="14" height="13.500" rx="4" fill="url(#gLt)" stroke="#555b66" stroke-width="1.200"/><path d="M5 5H10V14H5Z" fill="#d5d8e0"/><path d="M13 0V7M9.500 3.500H16M10.500 1 15.500 6M15.500 1 10.500 6" stroke="#e55a12"/><circle cx="13" cy="3.500" r="1.300" fill="#ffe45c"/></svg><select id="op" class="flex-grow-1"><option>New Body</option></select><svg width="6" height="4"><use href="#caret"/></svg></div></div>
        <div class="dialog-foot d-flex align-items-center">
          <svg width="12" height="12"><circle cx="6" cy="6" r="6" fill="#000"/><path d="M6 2V4M4.500 5H6.500V9M4.500 9.500H8" stroke="#fff" stroke-width="1.500" fill="none"/></svg>
          <button type="submit" class="foot-btn ms-auto">OK</button><button type="button" class="foot-btn" style="margin-left:10px">Cancel</button>
        </div>
      </form>
    </aside>
  </main>

  <div class="bottom-dock">
    <div class="side-left"><div class="dock-head dock-wide d-flex align-items-center border-top-0"><span style="margin-left:24px;padding-top:1px">COMMENTS</span>
      <button class="ms-auto me-2" aria-label="Expand comments"><svg width="9" height="9"><circle cx="4.500" cy="4.500" r="4.500" fill="#222"/><path d="M2 4.500H7M4.500 2V7" stroke="#fff" stroke-width="1.300"/></svg></button><i class="grip"></i></div></div>
    <div class="nav-bar d-flex align-items-center">
      <button aria-label="Orbit" class="d-flex align-items-center" style="gap:4px"><svg width="18" height="18" viewBox="0 0 18 18"><ellipse cx="8" cy="9" rx="3" ry="7.500" fill="none" stroke="#555" stroke-width="1.500"/><path d="M5 5Q1 7 1.500 9 2 12 8 12.500T16.500 10Q17 7 12 6" fill="none" stroke="#555" stroke-width="1.400"/><path d="M8 6V11M5.500 8.500H10.500" stroke="#1b6fe0" stroke-width="1.300"/><path d="M12 2V6M10 4H14" stroke="#444"/></svg><svg width="7" height="5"><use href="#caret"/></svg></button>
      <button aria-label="Look at" style="margin-left:4px"><svg width="18" height="18" viewBox="0 0 18 18"><path d="M2 6 10 2 7 5 14 3" fill="none" stroke="#555" stroke-width="1.300"/><rect x="1.500" y="6.500" width="15" height="10" fill="#e6e9ee" stroke="#4c525c" stroke-width="1.300"/><rect x="4.500" y="9.500" width="9" height="4" fill="#aeb7c6" stroke="#4c525c"/></svg></button>
      <button aria-label="Pan" style="margin-left:8px"><svg width="18" height="18" viewBox="0 0 18 18"><path d="M6 16 1 10Q2 8 5 10L3 5Q4 3 5 4L7 8 6.500 2.500Q8 .8 9 2.500L9.500 7 11 2Q12.500 1 13 3L12.500 8 15 4.500Q16.500 4 16.500 6L14.500 12 13 16Z" fill="#fff" stroke="#444b57" stroke-width="1.100"/></svg></button>
      <button aria-label="Zoom" style="margin-left:8px"><svg width="18" height="18" viewBox="0 0 18 18"><circle cx="6.500" cy="7.500" r="4.800" fill="#e4f1f3" stroke="#5b636e" stroke-width="1.300"/><path d="M10 11 15 16" stroke="#333" stroke-width="3"/><path d="M14.500 1V6M12 3.500H17M12 8H17" stroke="#333"/></svg></button>
      <button aria-label="Fit" class="d-flex align-items-center" style="gap:4px;margin-left:8px"><svg width="18" height="18" viewBox="0 0 18 18"><rect x="1" y="1" width="15" height="15" fill="none" stroke="#555" stroke-dasharray="3 2"/><circle cx="7.500" cy="7.500" r="6" fill="#e4f1f3" stroke="#5b636e" stroke-width="1.300"/><path d="M12 12 16.500 16.500" stroke="#333" stroke-width="3"/></svg><svg width="7" height="5"><use href="#caret"/></svg></button>
      <button aria-label="Display settings" class="d-flex align-items-center" style="gap:2px;margin-left:12px"><svg width="18" height="18" viewBox="0 0 18 18"><rect x="1.500" y="1.500" width="15" height="11.500" fill="#e8ebf0" stroke="#444b57" stroke-width="1.300"/><rect x="3.500" y="3.500" width="11" height="7.500" fill="#9dbde8" stroke="#41608c"/><path d="M7 13H11L12 16.500H6Z" fill="#ccc" stroke="#444b57"/></svg><svg width="7" height="5"><use href="#caret"/></svg></button>
      <button aria-label="Grid settings" class="d-flex align-items-center" style="gap:2px;margin-left:4px"><svg width="18" height="18" viewBox="0 0 18 18"><rect x="1.500" y="1.500" width="15" height="15" fill="#fff" stroke="#666"/><path d="M4.500 1V17M7.500 1V17M10.500 1V17M13.500 1V17M1 4.500H17M1 7.500H17M1 10.500H17M1 13.500H17" stroke="#7c828d"/></svg><svg width="7" height="5"><use href="#caret"/></svg></button>
      <button aria-label="Viewports" class="d-flex align-items-center" style="gap:2px;margin-left:4px"><svg width="18" height="18" viewBox="0 0 18 18"><g fill="#a9c3ea" stroke="#3c547c" stroke-width="1.200"><rect x="1.500" y="3" width="7" height="5.500"/><rect x="9.500" y="3" width="7" height="5.500"/><rect x="1.500" y="9.500" width="7" height="6"/><rect x="9.500" y="9.500" width="7" height="6"/></g><path d="M3.500 5H6.500V7H3.500ZM11.500 5H14.500V7H11.500ZM3.500 11.500H6.500V13.500H3.500ZM11.500 11.500H14.500V13.500H11.500Z" fill="none" stroke="#6c8fc6"/></svg><svg width="7" height="5"><use href="#caret"/></svg></button>
    </div>
    <div class="status-text text-end">Multiple selections</div>
  </div>

  <footer class="timeline d-flex">
    <div class="play-controls d-flex align-items-center align-self-start">
      <button aria-label="Go to start"><svg width="24" height="24"><path d="M6 6V19" stroke="#444" stroke-width="1.700"/><path d="M17 6V19L7 12.500Z" fill="#444"/></svg></button>
      <button aria-label="Step back"><svg width="24" height="24"><path d="M14 7V18L4 12.500Z" fill="#444"/><path d="M16.500 9.500V15.500" stroke="#444" stroke-width="2"/></svg></button>
      <button aria-label="Play"><svg width="24" height="24"><path d="M5 5V20L17 12.500Z" fill="#444"/></svg></button>
      <button aria-label="Step forward"><svg width="24" height="24"><path d="M7 7V18L17 12.500Z" fill="#444"/><path d="M4.500 9.500V15.500" stroke="#444" stroke-width="2"/></svg></button>
      <button aria-label="Go to end"><svg width="24" height="24"><path d="M16 6V19" stroke="#444" stroke-width="1.700"/><path d="M5 6V19L15 12.500Z" fill="#444"/></svg></button>
    </div>
    <div class="feature-track">
      <div class="range-bar"></div>
      <div class="d-flex">
        <button aria-label="MeshBody1"><svg width="20" height="18" viewBox="-2 -1 20 18"><use href="#mesh" width="16" height="16"/></svg></button>
        <button aria-label="Sketch1"><svg width="20" height="18" viewBox="-2 -1 20 18"><use href="#sketch" width="16" height="16"/></svg></button>
        <button aria-label="Sketch2"><svg width="20" height="18" viewBox="-2 -1 20 18"><use href="#sketch" width="16" height="16"/></svg></button>
        <button aria-label="Sketch3"><svg width="20" height="18" viewBox="-2 -1 20 18"><use href="#sketch" width="16" height="16"/></svg></button>
        <button aria-label="Loft"><svg width="20" height="18" viewBox="-2 -1 20 18"><path d="M.7 1H15.300V7L11 13H5L.7 7Z" fill="#a9c3ea" stroke="#33496d" stroke-width="1.200"/><path d="M5 1H11L9 8H7Z" fill="#fff"/><circle cx="8" cy="11.500" r="3.500" fill="#f1f1f1" stroke="#444"/></svg></button>
        <button aria-label="Unstitch"><svg width="20" height="18" viewBox="-2 -1 20 18"><rect x=".7" y="3" width="12" height="12.500" fill="#f6b68d" stroke="#a4501c"/><path d="M6.500 3V15M4 6H9M4 9H9M4 12H9" stroke="#222"/><path d="M10 1 16 7M16 1 10 7" stroke="#d22" stroke-width="1.800"/></svg></button>
        <button aria-label="Delete face"><svg width="20" height="18" viewBox="-2 -1 20 18"><use href="#removeFace" width="16" height="16"/></svg></button>
        <button aria-label="Delete face"><svg width="20" height="18" viewBox="-2 -1 20 18"><use href="#removeFace" width="16" height="16"/></svg></button>
        <button aria-label="Thicken"><svg width="20" height="18" viewBox="-2 -1 20 18"><path d="M1 9 8 2 14 4V9L8 15 1 13Z" fill="#8eb4e6" stroke="#33496d"/><path d="M2 9 8 3 13 5 7 10Z" fill="#eef0f4" stroke="#666"/></svg></button>
      </div>
      <svg width="212" height="10" viewBox="0 0 212 10"><path d="M11 1V6H203V1M34 1V6M58 1V6M82 1V6M106 1V6M130 1V6M154 1V6M178 1V6" fill="none" stroke="#c6c6c6" stroke-width="2"/></svg>
      <svg class="track-hash" width="17" height="6"><path d="M1 5.500 5 .5M6 5.500 10 .5M11 5.500 15 .5" stroke="#333" stroke-width="2"/></svg>
      <svg class="track-marker" width="13" height="33"><path d="M0 0H12V4L7.500 9V32H5V9L0 4Z" fill="#666"/></svg>
    </div>
    <button class="ms-auto align-self-start" aria-label="Timeline settings" style="margin-top:14px"><svg width="16" height="16"><use href="#gear"/></svg></button>
    <div class="corner-block"></div>
  </footer>
  <div class="base-line"></div>
</div>
</body>
</html>
